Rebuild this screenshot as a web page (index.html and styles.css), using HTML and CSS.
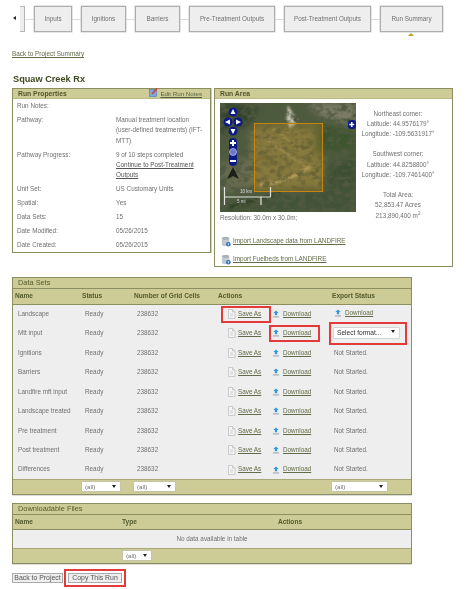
FILE: index.html
```html
<!DOCTYPE html>
<html lang="en">
<head>
<meta charset="utf-8">
<title>Squaw Creek Rx</title>
<link rel="stylesheet" href="styles.css">
</head>
<body>
<svg class="defs" width="0" height="0" aria-hidden="true">
  <symbol id="i-page" viewBox="0 0 9 10">
    <path d="M1.500.5h4l2.500 2.500v6.500h-6.500z" fill="#f4f4f4" stroke="#c2c2c2" stroke-width=".8"/>
    <path d="M5.500.5v2.500h2.500" fill="#ddd" stroke="#c2c2c2" stroke-width=".7"/>
    <path d="M3 5h3M3 7h3" stroke="#c8c8c8" stroke-width=".8"/>
  </symbol>
  <symbol id="i-down" viewBox="0 0 9 9">
    <path d="M4.500.5l3 3h-1.700v2.500h-2.600v-2.500h-1.700z" fill="#2e9bd8"/>
    <path d="M1 7.800h7" stroke="#8a9aa5" stroke-width="1"/>
  </symbol>
  <symbol id="i-db" viewBox="0 0 12 13">
    <ellipse cx="5.500" cy="2.800" rx="4.500" ry="2" fill="#aab0b8"/>
    <path d="M1 3v7c0 1.200 2 2 4.500 2s4.500-.8 4.500-2v-7c0 1.200-2 2-4.500 2s-4.500-.8-4.500-2z" fill="#c3c8ce"/>
    <circle cx="8.800" cy="9.800" r="2.800" fill="#2f78c0"/>
    <path d="M8.800 8.500v2.600" stroke="#fff" stroke-width="1"/>
  </symbol>
</svg>

<nav class="steps">
  <span class="back-arrow"></span>
  <span class="stub"></span><span class="link-line"></span>
  <a class="step step-inputs">Inputs</a><span class="link-line"></span>
  <a class="step step-ignitions">Ignitions</a><span class="link-line"></span>
  <a class="step step-barriers">Barriers</a><span class="link-line"></span>
  <a class="step step-pre">Pre-Treatment Outputs</a><span class="link-line"></span>
  <a class="step step-post">Post-Treatment Outputs</a><span class="link-line"></span>
  <a class="step step-run">Run Summary<i class="caret"></i></a>
</nav>

<main class="page">
  <p class="backlink"><a href="#">Back to Project Summary</a></p>
  <h1 class="title">Squaw Creek Rx</h1>

  <div class="panels">
    <section class="panel panel-props">
      <header class="panel-head">
        <h2>Run Properties</h2>
        <a class="edit" href="#">
          <svg width="9" height="9" viewBox="0 0 9 9"><rect x=".5" y="1.500" width="7" height="7" fill="#7fa6dc" stroke="#4a77b8" stroke-width=".6"/><path d="M3 6l5-5.500" stroke="#e0352b" stroke-width="1.400"/></svg>
          <span>Edit Run Notes</span>
        </a>
      </header>
      <table class="props">
        <tr><th>Run Notes:</th><td></td></tr>
        <tr><th>Pathway:</th><td>Manual treatment location (user-defined treatments) (IFT-MTT)</td></tr>
        <tr><th>Pathway Progress:</th><td>9 of 10 steps completed <a href="#">Continue to Post-Treatment Outputs</a></td></tr>
        <tr><th>Unit Set:</th><td>US Customary Units</td></tr>
        <tr><th>Spatial:</th><td>Yes</td></tr>
        <tr><th>Data Sets:</th><td>15</td></tr>
        <tr><th>Date Modified:</th><td>05/26/2015</td></tr>
        <tr><th>Date Created:</th><td>05/26/2015</td></tr>
      </table>
    </section>

    <section class="panel panel-area">
      <header class="panel-head"><h2>Run Area</h2></header>
      <div class="area-body">
        <div class="map-col">
          <svg class="map" width="136" height="109" viewBox="0 0 136 109">
            <defs>
              <filter id="terrain" x="0" y="0" width="100%" height="100%">
                <feTurbulence type="fractalNoise" baseFrequency=".14 .19" numOctaves="4" seed="11"/>
                <feColorMatrix values="0 0 0 0 .08  0 0 0 0 .1  0 0 0 0 .05  2.400 2.400 0 0 -2.150"/>
              </filter>
              <filter id="soft"><feGaussianBlur stdDeviation="3.500"/></filter>
              <filter id="soft2"><feGaussianBlur stdDeviation=".8"/></filter>
            </defs>
            <rect width="136" height="109" fill="#4d5b3d"/>
            <g filter="url(#soft)">
              <path d="M0 0h40l-10 22-30 10z" fill="#36432e"/>
              <path d="M85 0h51v22l-30-6z" fill="#7b7b66"/>
              <path d="M0 60l30-6 10 30-40 6z" fill="#666a50"/>
              <path d="M85 70l51-18v57h-60z" fill="#3c5031"/>
              <path d="M30 25h74v60h-74z" fill="#75734a"/>
              <path d="M0 100l136-20v29h-136z" fill="#435338"/>
              <path d="M95 20l40 5v22l-40 5z" fill="#3c542e"/>
            </g>
            <g filter="url(#soft2)" fill="none">
              <path d="M68 2l10 16-8 8-4-10z" fill="#c4c2ae"/>
              <path d="M40 82c20-2 35-8 50-18" stroke="#c9b580" stroke-width="2.500"/>
              <path d="M45 35l45 32" stroke="#a89a6a" stroke-width="1.500"/>
              <path d="M52 25l30 22" stroke="#a09462" stroke-width="1.500"/>
              <path d="M36 58c8-8 16-4 18 4" stroke="#5c5830" stroke-width="2"/>
              <path d="M10 104l50-14" stroke="#2f3d24" stroke-width="3"/>
            </g>
            <rect width="136" height="109" filter="url(#terrain)"/>
            <rect x="34.500" y="20.500" width="68" height="68" fill="#bd8a1a" fill-opacity=".25" stroke="#c8860e"/>
            <g fill="#0c1a86">
              <circle cx="13" cy="9" r="4.500"/><circle cx="8" cy="19" r="4.500"/><circle cx="18" cy="19" r="4.500"/><circle cx="13" cy="28" r="4.500"/>
              <rect x="9" y="35" width="8" height="28" rx="4"/>
              <rect x="128" y="17" width="8" height="9" rx="3"/>
            </g>
            <g fill="#fff">
              <path d="M13 6l2.500 5h-5zM5 19l5-2.500v5zM21 19l-5-2.500v5zM13 31l2.500-5h-5z"/>
              <path d="M12 37h2v2h2v2h-2v2h-2v-2h-2v-2h2zM10 57h6v2h-6zM131 19h1.500v1.800h1.700v1.500h-1.700v1.700h-1.500v-1.700h-1.700v-1.500h1.700z"/>
            </g>
            <circle cx="13" cy="49" r="3.500" fill="#6f78c8" stroke="#c5c9ee" stroke-width=".7"/>
            <path d="M13 64l6 12-6-3-6 3z" fill="#1d2018"/>
            <path d="M4.500 84v18M4.500 94h46M50.500 84v10M41 94v8" fill="none" stroke="#e4e4de" stroke-width="1.200"/>
            <text class="map-scale" x="20" y="90">10 km</text>
            <text class="map-scale" x="17" y="100">5 mi</text>
          </svg>
          <p class="resolution">Resolution: 30.0m x 30.0m;</p>
        </div>
        <div class="coords">
          <p>Northeast corner:<br>Latitude: 44.9576179°<br>Longitude: -109.5631917°</p>
          <p>Southwest corner:<br>Latitude: 44.8258800°<br>Longitude: -109.7461400°</p>
          <p>Total Area:<br>52,853.47 Acres<br>213,890,400 m<sup>2</sup></p>
        </div>
      </div>
      <a class="import import-first" href="#"><svg width="10" height="11"><use href="#i-db"/></svg><span>Import Landscape data from LANDFIRE</span></a>
      <a class="import" href="#"><svg width="10" height="11"><use href="#i-db"/></svg><span>Import Fuelbeds from LANDFIRE</span></a>
    </section>
  </div>

  <section class="grid-box grid-sets">
    <h2 class="grid-title">Data Sets</h2>
    <table class="grid">
      <colgroup><col class="c-name"><col class="c-status"><col class="c-cells"><col class="c-actions"><col class="c-export"></colgroup>
      <thead><tr><th>Name</th><th>Status</th><th>Number of Grid Cells</th><th>Actions</th><th>Export Status</th></tr></thead>
      <tbody>
        <tr><td>Landscape</td><td>Ready</td><td>238632</td>
          <td><div class="acts"><a class="act act-save flag-save" href="#"><svg width="9" height="10"><use href="#i-page"/></svg><span>Save As</span></a><a class="act act-dl" href="#"><svg width="8" height="8"><use href="#i-down"/></svg><span>Download</span></a></div></td>
          <td class="exp"><a class="act act-dl" href="#"><svg width="8" height="8"><use href="#i-down"/></svg><span>Download</span></a></td></tr>
        <tr><td>Mtt input</td><td>Ready</td><td>238632</td>
          <td><div class="acts"><a class="act act-save" href="#"><svg width="9" height="10"><use href="#i-page"/></svg><span>Save As</span></a><a class="act act-dl flag-dl" href="#"><svg width="8" height="8"><use href="#i-down"/></svg><span>Download</span></a></div></td>
          <td class="exp"><span class="pick-flag"><span class="pick pick-format">Select format...<i></i></span></span></td></tr>
        <tr><td>Ignitions</td><td>Ready</td><td>238632</td>
          <td><div class="acts"><a class="act act-save" href="#"><svg width="9" height="10"><use href="#i-page"/></svg><span>Save As</span></a><a class="act act-dl" href="#"><svg width="8" height="8"><use href="#i-down"/></svg><span>Download</span></a></div></td>
          <td class="exp">Not Started.</td></tr>
        <tr><td>Barriers</td><td>Ready</td><td>238632</td>
          <td><div class="acts"><a class="act act-save" href="#"><svg width="9" height="10"><use href="#i-page"/></svg><span>Save As</span></a><a class="act act-dl" href="#"><svg width="8" height="8"><use href="#i-down"/></svg><span>Download</span></a></div></td>
          <td class="exp">Not Started.</td></tr>
        <tr><td>Landfire mft input</td><td>Ready</td><td>238632</td>
          <td><div class="acts"><a class="act act-save" href="#"><svg width="9" height="10"><use href="#i-page"/></svg><span>Save As</span></a><a class="act act-dl" href="#"><svg width="8" height="8"><use href="#i-down"/></svg><span>Download</span></a></div></td>
          <td class="exp">Not Started.</td></tr>
        <tr><td>Landscape treated</td><td>Ready</td><td>238632</td>
          <td><div class="acts"><a class="act act-save" href="#"><svg width="9" height="10"><use href="#i-page"/></svg><span>Save As</span></a><a class="act act-dl" href="#"><svg width="8" height="8"><use href="#i-down"/></svg><span>Download</span></a></div></td>
          <td class="exp">Not Started.</td></tr>
        <tr><td>Pre treatment</td><td>Ready</td><td>238632</td>
          <td><div class="acts"><a class="act act-save" href="#"><svg width="9" height="10"><use href="#i-page"/></svg><span>Save As</span></a><a class="act act-dl" href="#"><svg width="8" height="8"><use href="#i-down"/></svg><span>Download</span></a></div></td>
          <td class="exp">Not Started.</td></tr>
        <tr><td>Post treatment</td><td>Ready</td><td>238632</td>
          <td><div class="acts"><a class="act act-save" href="#"><svg width="9" height="10"><use href="#i-page"/></svg><span>Save As</span></a><a class="act act-dl" href="#"><svg width="8" height="8"><use href="#i-down"/></svg><span>Download</span></a></div></td>
          <td class="exp">Not Started.</td></tr>
        <tr><td>Differences</td><td>Ready</td><td>238632</td>
          <td><div class="acts"><a class="act act-save" href="#"><svg width="9" height="10"><use href="#i-page"/></svg><span>Save As</span></a><a class="act act-dl" href="#"><svg width="8" height="8"><use href="#i-down"/></svg><span>Download</span></a></div></td>
          <td class="exp">Not Started.</td></tr>
      </tbody>
      <tfoot><tr><td></td><td><span class="pick pick-a">(all)<i></i></span></td><td><span class="pick pick-b">(all)<i></i></span></td><td></td><td><span class="pick pick-c">(all)<i></i></span></td></tr></tfoot>
    </table>
  </section>

  <section class="grid-box grid-files">
    <h2 class="grid-title">Downloadable Files</h2>
    <table class="grid">
      <colgroup><col class="c-fname"><col class="c-ftype"><col></colgroup>
      <thead><tr><th>Name</th><th>Type</th><th class="center">Actions</th></tr></thead>
      <tbody><tr><td colspan="3" class="center empty">No data available in table</td></tr></tbody>
      <tfoot><tr><td></td><td><span class="pick pick-d">(all)<i></i></span></td><td></td></tr></tfoot>
    </table>
  </section>

  <div class="buttons">
    <button class="btn btn-back" type="button">Back to Project</button>
    <button class="btn btn-copy" type="button">Copy This Run</button>
  </div>
</main>
</body>
</html>
```

FILE: styles.css
```css
* { box-sizing: border-box; }
html, body { margin: 0; padding: 0; background: #fff; }
body {
  width: 465px;
  height: 589px;
  overflow: hidden;
  font-family: "Liberation Sans", Arial, sans-serif;
  font-size: 6.35px;
  line-height: 10.4px;
  color: #707070;
  filter: blur(.38px);
}
.defs { position: absolute; }
a { color: #626c48; text-decoration: underline; }

/* Step bar */
.steps { display: flex; align-items: flex-start; height: 37px; padding: 6px 0 0 13px; }
.back-arrow {
  width: 0; height: 0; margin: 10px 3px 0 0;
  border-style: solid; border-width: 2.500px 3px 2.500px 0;
  border-color: transparent #222 transparent transparent;
}
.stub { width: 5px; height: 26px; margin-left: 1px; background: #eee; border: 1px solid #b5b5b5; border-left: 0; }
.link-line { width: 9px; height: 1px; margin-top: 13px; background: #ddd; }
.step {
  position: relative;
  display: flex; align-items: center; justify-content: center;
  height: 26px;
  background: #eee;
  border: 1px solid #adadad;
  box-shadow: 0 0 0 .5px #ccc;
  color: #707070;
  text-decoration: none;
  font-size: 6.3px;
}
.step-inputs { width: 38px; }
.step-ignitions { width: 45px; }
.step-barriers { width: 45px; }
.step-pre { width: 86px; }
.step-post { width: 87px; }
.step-run { width: 63px; }
.caret {
  position: absolute; left: 27px; bottom: -5px;
  border-style: solid; border-width: 0 3.500px 3px;
  border-color: transparent transparent #c69a2c;
}

/* Page */
.page { padding: 0 0 0 12px; }
.backlink { margin: 12px 0 0; height: 10px; font-size: 6.4px; }
.title { margin: 14px 0 0 1px; height: 13px; font-size: 9.2px; line-height: 13px; font-weight: bold; color: #3f4a22; }

.panels { display: flex; align-items: flex-start; gap: 3px; margin-top: 2px; }
.panel { border: 1px solid #8b8f5f; background: #fff; }
.panel-props { width: 199px; height: 165px; box-shadow: 1px 0 0 #ccc; }
.panel-area { width: 239px; height: 179px; }
.panel-head {
  display: flex; align-items: center; justify-content: space-between;
  height: 10px; padding: 0 8px 0 5px;
  background: #cdcc96;
  border-bottom: 1px solid #b9b985;
}
.panel-head h2 { margin: 0; font-size: 6.8px; line-height: 10px; font-weight: bold; color: #50552a; }
.edit { display: flex; align-items: center; gap: 2px; font-size: 6.2px; line-height: 9px; color: #5a6240; }
.edit svg { margin-top: -2px; }

.props { width: 100%; border-collapse: collapse; table-layout: fixed; }
.props th, .props td { padding: 1.800px 4px; vertical-align: top; text-align: left; font-weight: normal; }
.props th { width: 99px; }
.props td a { display: block; color: #555; }

.area-body { display: flex; padding: 3.500px 0 0 5px; }
.map-col { width: 136px; flex: none; }
.map { display: block; }
.map-scale { font: 4.500px "Liberation Sans", Arial, sans-serif; fill: #ddd; }
.resolution { margin: 1px 0 0; }
.coords { flex: 1; padding: 6px 12px 0 0; text-align: center; }
.coords p { margin: 0 0 9.500px; }
.coords sup { font-size: 4.500px; line-height: 0; }
.import { display: flex; align-items: center; gap: 2px; margin: 7px 0 0 6px; height: 11px; color: #626c48; }
.import-first { margin-top: 5px; }

/* Grids */
.grid-box { width: 400px; border: 1px solid #8b8f5f; background: #cdcc96; box-shadow: 0 1px 0 #ddd; }
.grid-sets { margin-top: 10px; }
.grid-files { margin-top: 8px; }
.grid-title {
  margin: 0; height: 10px; padding-left: 5px;
  font-size: 7.400px; line-height: 10px; font-weight: normal; color: #555b2c;
  border-bottom: 1px solid #8b8f5f;
  box-sizing: content-box;
}
.grid { width: 100%; border-collapse: collapse; table-layout: fixed; }
.grid thead th {
  height: 15px; padding: 0 0 0 2px;
  text-align: left; font-size: 6.6px; font-weight: bold; color: #555b2c;
  background: #cdcc96;
  border-bottom: 1px solid #8b8f5f;
}
.grid tbody td { height: 19.500px; padding: 0 0 0 5px; background: #eee; }
.grid tfoot td { height: 14px; padding: 0 0 0 2px; background: #cdcc96; border-top: 1px solid #a8a878; }
.grid .center { text-align: center; padding-left: 0; }
.grid .empty { height: 19px; }
.c-name { width: 67px; }
.c-status { width: 52px; }
.c-cells { width: 84px; }
.c-actions { width: 114px; }
.c-fname { width: 107px; }
.c-ftype { width: 49px; }
.grid tbody td.exp { padding-left: 4px; }

.acts { display: flex; gap: 6px; padding-left: 6px; }
.act { display: inline-flex; align-items: center; gap: 3px; color: #626c48; }
.act-save { width: 39px; }
.act-save span { margin-left: -1px; }
.flag-save {
  width: 46px;
  padding: 1.300px 3px 1.300px 4px;
  margin: -1.300px -3px -1.300px -4px;
  outline: 2px solid #e43a3a;
}
.flag-dl {
  padding: 1.300px 7px 1.300px 1px;
  margin: -1.300px -7px -1.300px -1px;
  outline: 2px solid #e43a3a;
}

.pick {
  position: relative;
  display: inline-block; height: 9px;
  padding-left: 3px;
  background: #fff;
  box-shadow: 0 0 0 .5px #bbb;
  font-size: 6.2px; line-height: 9px; color: #707070;
  vertical-align: middle;
}
.pick i {
  position: absolute; right: 4px; top: 2.500px;
  border-style: solid; border-width: 3.500px 2px 0;
  border-color: #222 transparent transparent;
}
.pick-a { width: 38px; }
.pick-b { width: 41px; }
.pick-c { width: 55px; }
.pick-d { width: 28px; margin-left: 1px; }
.pick-flag {
  position: relative;
  z-index: 1;
  display: block;
  width: 78px;
  margin: -2px 0 -2px -5px;
  padding: 4px 6px 5px 3px;
  border: 2px solid #e43a3a;
}
.pick-format { display: block; height: 10px; color: #333; font-size: 6.600px; line-height: 10px; }

.buttons { display: flex; gap: 5px; margin-top: 9px; }
.btn {
  height: 10px; padding: 0;
  background: #eee;
  border: 1px solid #aaa;
  font: 6.900px/8px "Liberation Sans", Arial, sans-serif;
  color: #555;
}
.btn-back { width: 51px; }
.btn-copy { width: 54px; outline: 2px solid #e43a3a; outline-offset: 2px; }
```
